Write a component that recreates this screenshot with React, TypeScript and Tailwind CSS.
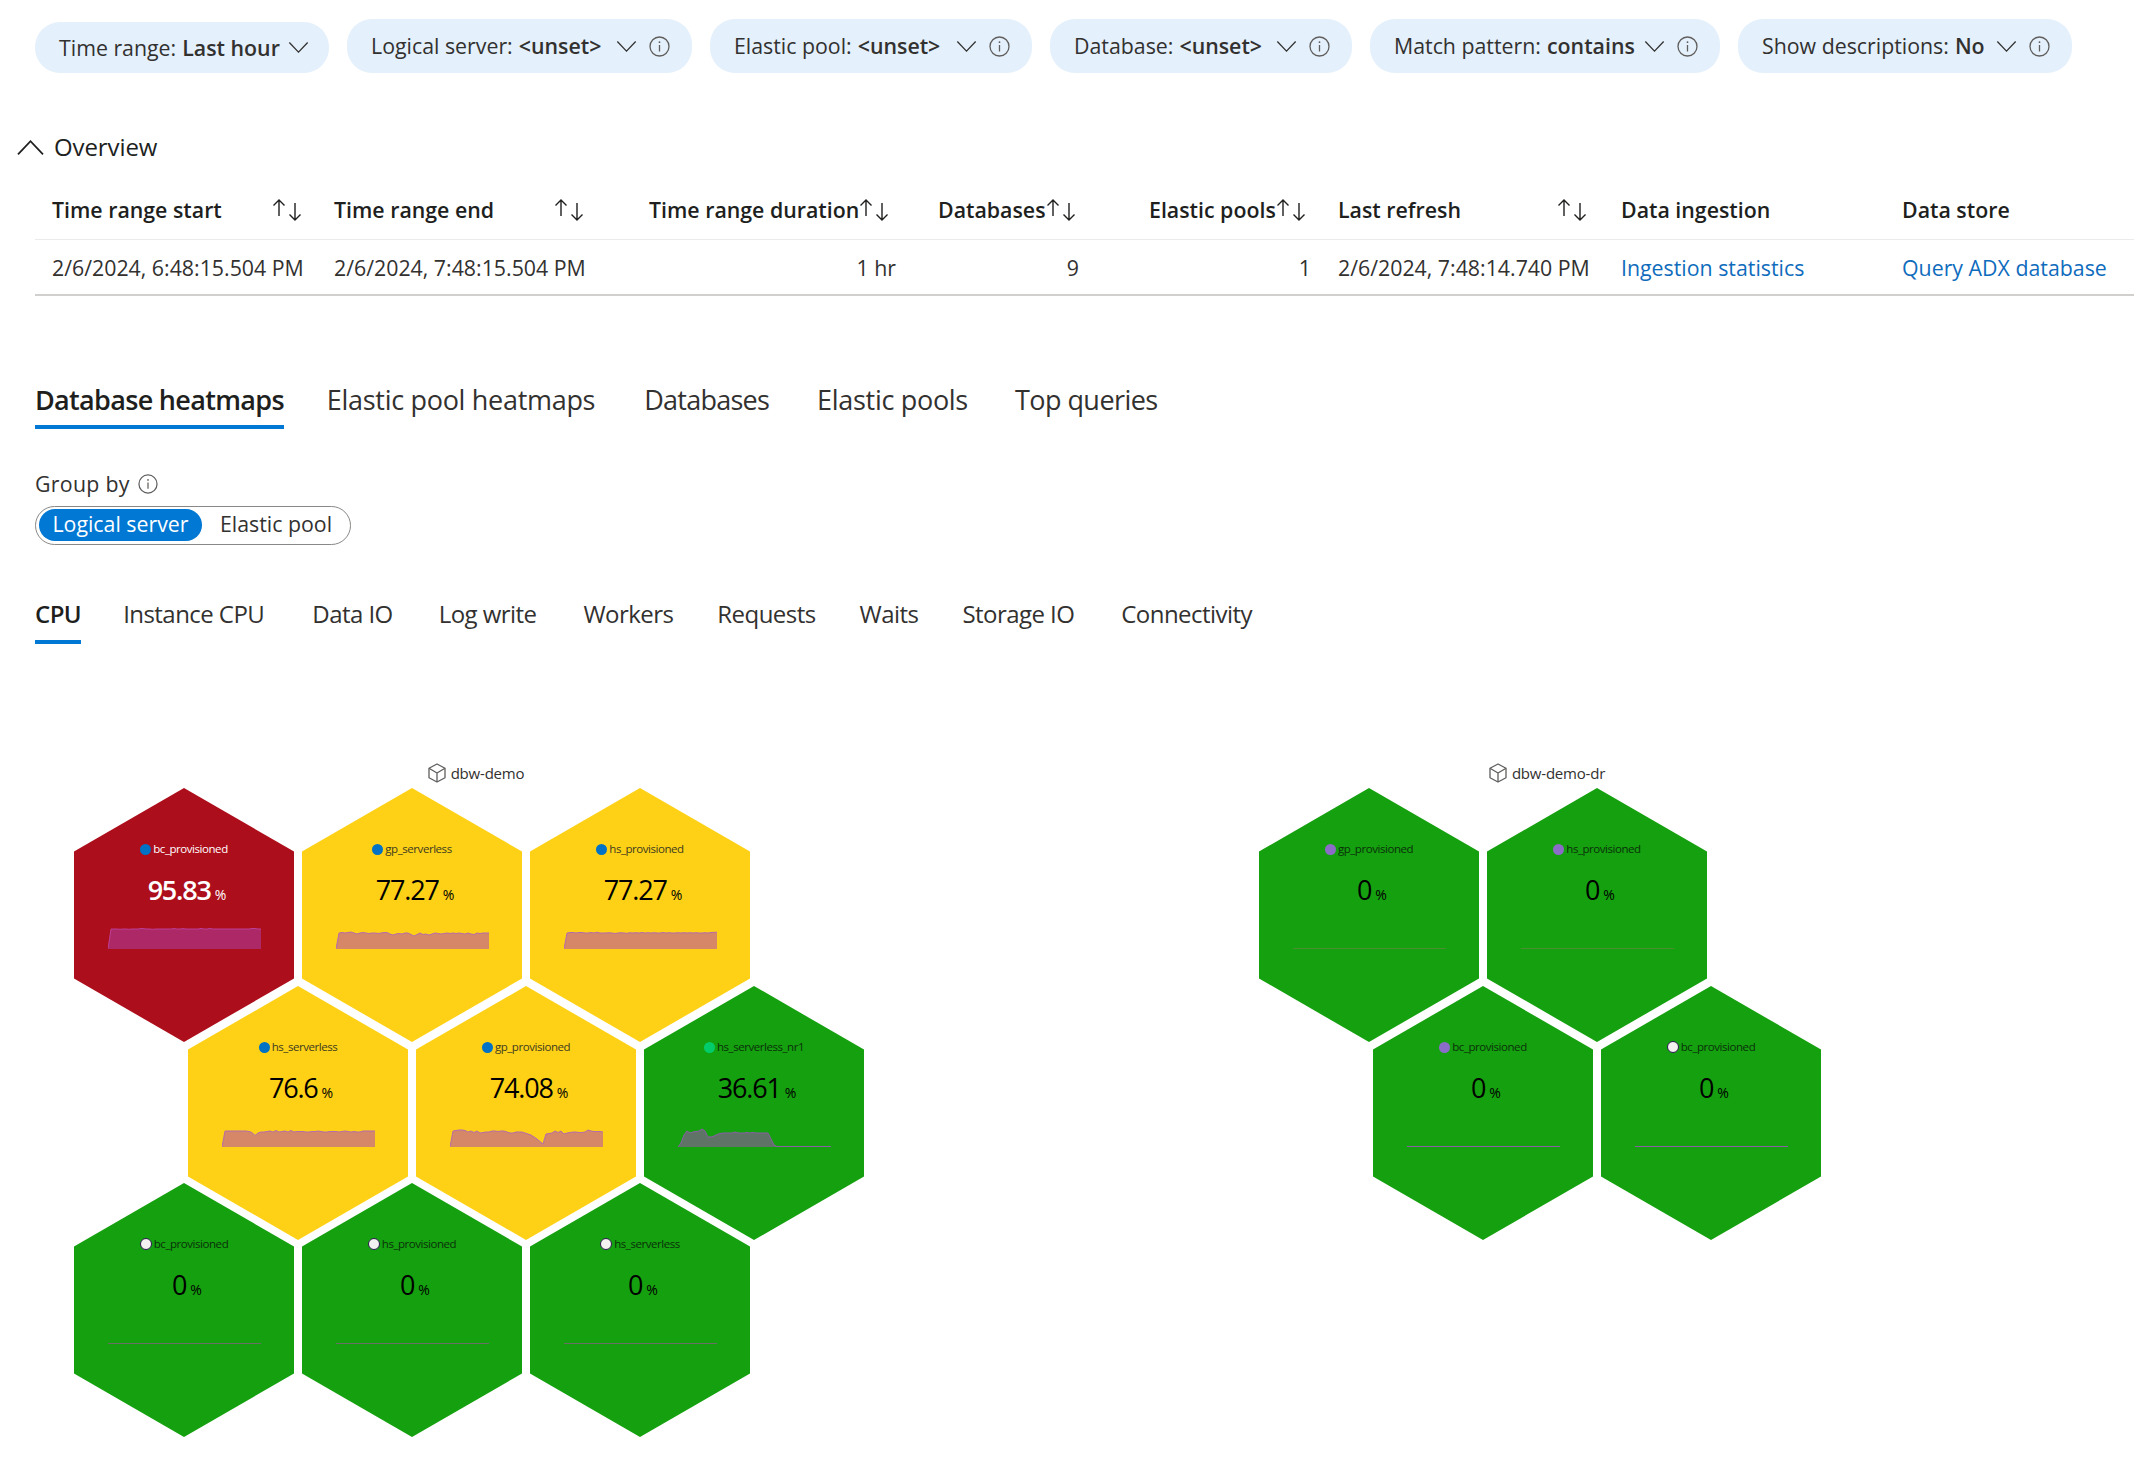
const hexShape = "[clip-path:polygon(50%_0,100%_25%,100%_75%,50%_100%,0_75%,0_25%)]";

const tones = {
  red: { bg: "bg-[#ad0e1b]", text: "text-white", label: "text-white", weight: "font-semibold", fill: "#ad2866", stroke: "#bd3f96" },
  yellow: { bg: "bg-[#fed116]", text: "text-black", label: "text-[#3d3a20]", weight: "font-medium", fill: "#d58768", stroke: "#b56cab" },
  green: { bg: "bg-[#15a00f]", text: "text-black", label: "text-[#0a300a]", weight: "font-medium", fill: "#5f7366", stroke: "#8a5fa6" },
};

const dots = {
  blue: "h-[11px] w-[11px] bg-[#0072c6]",
  mint: "h-[11px] w-[11px] bg-[#00cc6a]",
  purple: "h-[11px] w-[11px] bg-[#8c6cc9]",
  white: "h-3 w-3 bg-[#f3f2f1] border-[1.5px] border-[#2b1b4e]",
};

type HexItem = {
  name: string;
  value: string;
  tone: keyof typeof tones;
  dot: keyof typeof dots;
  spark?: number[];
  line?: string;
};

const leftRows: HexItem[][] = [
  [
    { name: "bc_provisioned", value: "95.83", tone: "red", dot: "blue", spark: [0,20,20,20,19.7,20,20,19.7,20,20,20,20.5,20.3,20,20,19.7,20,20,20,20,20,20,20.4,20,20,20.4,20,20,20,20,20,20.6,20,20,20.5,20,20,20,20,20,20,20,20,20,20,20,20,20,20.5,20.5,20,20] },
    { name: "gp_serverless", value: "77.27", tone: "yellow", dot: "blue", spark: [0,16,16.5,16,16.5,17,16,15,16,16.5,16,15.5,16,16,15.5,16,16.5,16.5,15,14,15,15.5,15,16,16,14.5,13,14.5,16,14.5,15,14,15,16,15.5,15,15.5,16,15.5,16,15.5,16,15.5,15,16,15,14.5,16,15.5,16,16,16] },
    { name: "hs_provisioned", value: "77.27", tone: "yellow", dot: "blue", spark: [0,16,16.5,16.5,16,16.5,16.5,16,16,16.5,16,16.8,16,16,16,16.3,16,15.5,16,16.3,16,15.7,16.3,16,16.3,16,16.5,16,16.3,16,16.3,16,16,16.5,16,16.3,16,16,16.3,16,16.3,16,16.3,16,16.3,16,16,16.3,16,16.5,16.7,16.7] },
  ],
  [
    { name: "hs_serverless", value: "76.6", tone: "yellow", dot: "blue", spark: [0,16,16,16,16,16,16,16,16,15.5,14.5,11.5,14,15,15,15.5,16,15,16.5,15,15.5,16,15,16.5,15,15.5,15.5,15.5,15,15,15.5,15.5,16,15.5,15,15,15.5,15.5,15.5,15,15.5,16,15.5,15,15.5,15,15,16,16,16,16,16] },
    { name: "gp_provisioned", value: "74.08", tone: "yellow", dot: "blue", spark: [0,16,16.5,17,17,16.5,15,16,14.5,16,14,14.5,15,15,16,16,15.5,16,16,15,14,14,15,15,15,14,13,12,10,8,5.5,3,13,13.5,14,16,14.5,16,13,14,14.5,15,15,14.5,14.5,15,17,16,15.5,15.5,15.5,15] },
    { name: "hs_serverless_nr1", value: "36.61", tone: "green", dot: "mint", spark: [0,4,12,16,14,15,15.5,16,18,16,10,10,11,12.5,13.5,14,14,14,14,15,14,14,14,14.5,14,14.5,14,14,14,14,14,8,2,0.5,0.5,0.5,0.5,0.5,0.5,0.5,0.5,0.5,0.5,0.5,0.5,0.5,0.5,0.5,0.5,0.5,0.5,0.5] },
  ],
  [
    { name: "bc_provisioned", value: "0", tone: "green", dot: "white", line: "#6a6f66" },
    { name: "hs_provisioned", value: "0", tone: "green", dot: "white", line: "#6a6f66" },
    { name: "hs_serverless", value: "0", tone: "green", dot: "white", line: "#6a6f66" },
  ],
];

const rightRows: HexItem[][] = [
  [
    { name: "gp_provisioned", value: "0", tone: "green", dot: "purple", line: "#4a8f30" },
    { name: "hs_provisioned", value: "0", tone: "green", dot: "purple", line: "#4a8f30" },
  ],
  [
    { name: "bc_provisioned", value: "0", tone: "green", dot: "purple", line: "#8a5fa6" },
    { name: "bc_provisioned", value: "0", tone: "green", dot: "white", line: "#8a5fa6" },
  ],
];

const filters = [
  { label: "Time range:", value: "Last hour", info: false, w: "w-[294px]" },
  { label: "Logical server:", value: "<unset>", info: true, w: "w-[345px]" },
  { label: "Elastic pool:", value: "<unset>", info: true, w: "w-[322px]" },
  { label: "Database:", value: "<unset>", info: true, w: "w-[302px]" },
  { label: "Match pattern:", value: "contains", info: true, w: "w-[350px]" },
  { label: "Show descriptions:", value: "No", info: true, w: "w-[334px]" },
];

function Chevron({ up = false, className = "" }: { up?: boolean; className?: string }) {
  return (
    <svg viewBox="0 0 22 12" className={className} fill="none" stroke="currentColor" strokeWidth="1.4">
      <path d={up ? "M1 11.5 11 1l10 10.5" : "M1 .5 11 11 21 .5"} />
    </svg>
  );
}

function InfoIcon({ className = "" }: { className?: string }) {
  return (
    <svg viewBox="0 0 21 21" className={className} fill="none" stroke="#605e5c">
      <circle cx="10.5" cy="10.5" r="9.5" strokeWidth="1.3" />
      <path d="M10.5 9v6.5" strokeWidth="1.3" />
      <circle cx="10.5" cy="6.2" r=".9" fill="#605e5c" stroke="none" />
    </svg>
  );
}

function SortIcon() {
  return (
    <svg viewBox="0 0 30 24" className="h-6 w-[30px] shrink-0" fill="none" stroke="#201f1e" strokeWidth="1.4">
      <path d="M7 18V2M1.500 7.500 7 2l5.500 5.500" />
      <path d="M23 5v17M17.500 16.500 23 22l5.500-5.500" />
    </svg>
  );
}

function CubeIcon() {
  return (
    <svg viewBox="0 0 18 20" className="h-5 w-[18px] shrink-0" fill="none" stroke="#605e5c" strokeWidth="1.3" strokeLinejoin="round">
      <path d="M9 1 17 5.300v9.400L9 19l-8-4.300V5.300z" />
      <path d="M1 5.300 9 10l8-4.700M9 10v9" />
    </svg>
  );
}

function Spark({ data, fill, stroke }: { data: number[]; fill: string; stroke: string }) {
  const step = 153 / (data.length - 1);
  const pts = data.map((h, i) => `${(i * step).toFixed(1)},${(24 - h).toFixed(1)}`).join(" ");
  return (
    <svg viewBox="0 0 153 24" className="h-6 w-[153px]" fill="none">
      <polygon points={`${pts} 153,24`} fill={fill} />
      <polyline points={pts} stroke={stroke} strokeWidth="1" />
    </svg>
  );
}

function Hex({ item }: { item: HexItem }) {
  const tone = tones[item.tone];
  return (
    <div className={`flex h-[254px] w-[220px] shrink-0 flex-col items-center pt-[53px] ${hexShape} ${tone.bg}`}>
      <div className={`flex h-4 items-center gap-[2px] text-[11.5px] leading-4 tracking-[-0.45px] ${tone.label}`}>
        <span className={`rounded-full ${dots[item.dot]}`} />
        {item.name}
      </div>
      <div className={`mt-[15px] flex h-9 items-baseline gap-1 pl-[6px] leading-9 ${tone.text}`}>
        <span className={`text-[27px] tracking-[-1.2px] ${tone.weight}`}>{item.value}</span>
        <span className="text-[14px] tracking-normal">%</span>
      </div>
      <div className="mt-[17px]">
        {item.spark ? (
          <Spark data={item.spark} fill={tone.fill} stroke={tone.stroke} />
        ) : (
          <svg viewBox="0 0 153 24" className="h-6 w-[153px]">
            <path d="M0 23.500H153" stroke={item.line} strokeWidth="1" />
          </svg>
        )}
      </div>
    </div>
  );
}

function HexGroup({ name, rows, className }: { name: string; rows: HexItem[][]; className: string }) {
  return (
    <div className={className}>
      <div className="flex h-5 items-center justify-center gap-[5px] pb-[2px] pl-[14px] text-[15px] leading-5 tracking-[-0.2px] text-[#323130]">
        <CubeIcon />
        {name}
      </div>
      <div className="mt-1">
        {rows.map((row, r) => (
          <div key={r} className={`flex gap-2 ${r === 1 ? "-mt-[56px] pl-[114px]" : ""} ${r === 2 ? "-mt-[57px]" : ""}`}>
            {row.map((item, i) => (
              <Hex key={i} item={item} />
            ))}
          </div>
        ))}
      </div>
    </div>
  );
}

const overviewCols = [
  { title: "Time range start", value: "2/6/2024, 6:48:15.504 PM", w: "w-[282px]", headPr: "pr-[15px]", cellPr: "" },
  { title: "Time range end", value: "2/6/2024, 7:48:15.504 PM", w: "w-[315px]", headPr: "pr-[48px]", cellPr: "" },
  { title: "Time range duration", value: "1 hr", w: "w-[289px]", headPr: "pr-[32px]", cellPr: "justify-end pr-[25px]" },
  { title: "Databases", value: "9", w: "w-[211px]", headPr: "pr-[59px]", cellPr: "justify-end pr-[53px]" },
  { title: "Elastic pools", value: "1", w: "w-[189px]", headPr: "pr-[16px]", cellPr: "justify-end pr-[10px]" },
  { title: "Last refresh", value: "2/6/2024, 7:48:14.740 PM", w: "w-[283px]", headPr: "pr-[17px]", cellPr: "" },
  { title: "Data ingestion", value: "Ingestion statistics", w: "w-[281px]", headPr: "", cellPr: "text-[#0f6cbd]", noSort: true },
  { title: "Data store", value: "Query ADX database", w: "w-[249px]", headPr: "", cellPr: "text-[#0f6cbd]", noSort: true },
];

const mainTabs = [
  { label: "Database heatmaps", active: true, cls: "tracking-[-0.68px]" },
  { label: "Elastic pool heatmaps", cls: "ml-[43px] tracking-[-0.3px]" },
  { label: "Databases", cls: "ml-[49px] tracking-[-0.75px]" },
  { label: "Elastic pools", cls: "ml-[48px] tracking-[-0.3px]" },
  { label: "Top queries", cls: "ml-[47px] tracking-[-0.55px]" },
];

const subTabs = [
  { label: "CPU", gap: "" },
  { label: "Instance CPU", gap: "ml-[42px]" },
  { label: "Data IO", gap: "ml-[48px]" },
  { label: "Log write", gap: "ml-[46px]" },
  { label: "Workers", gap: "ml-[47px]" },
  { label: "Requests", gap: "ml-[44px]" },
  { label: "Waits", gap: "ml-[44px]" },
  { label: "Storage IO", gap: "ml-[44px]" },
  { label: "Connectivity", gap: "ml-[47px]" },
];

export default function App() {
  return (
    <div className="h-[1458px] w-[2134px] overflow-hidden bg-white text-[21.33px] text-[#323130] [font-family:'Open_Sans',sans-serif]">
      <div className="flex items-end gap-[18px] pl-[35px] pt-[19px]">
        {filters.map((f) => (
          <div key={f.label} className={`flex items-center whitespace-nowrap rounded-[25px] bg-[#e4f0fb] pl-6 ${f.w} ${f.info ? "h-[54px] pr-[22px]" : "h-[51px] pr-5"}`}>
            <span>{f.label}</span>
            <span className="ml-[6px] font-semibold">{f.value}</span>
            <Chevron className="ml-auto h-[11px] w-[21px] text-[#323130]" />
            {f.info && <InfoIcon className="ml-3 h-[21px] w-[21px]" />}
          </div>
        ))}
      </div>

      <div className="ml-4 mt-[59px] flex h-[30px] items-center gap-[9px] text-[24px] font-medium tracking-[-0.1px] text-[#201f1e]">
        <Chevron up className="h-[15px] w-[29px] text-[#201f1e]" />
        Overview
      </div>

      <div className="ml-[35px] mt-[19px]">
        <div className="flex h-[59px] border-b border-[#edebe9]">
          {overviewCols.map((c) => (
            <div key={c.title} className={`flex items-center pl-[17px] font-semibold text-[#201f1e] ${c.w} ${c.headPr}`}>
              <span className="whitespace-nowrap">{c.title}</span>
              {!c.noSort && <span className="ml-auto"><SortIcon /></span>}
            </div>
          ))}
        </div>
        <div className="flex h-[56px] border-b-2 border-[#d2d0ce]">
          {overviewCols.map((c) => (
            <div key={c.title} className={`flex items-center whitespace-nowrap pl-[17px] pt-[2px] ${c.w} ${c.cellPr}`}>
              {c.value}
            </div>
          ))}
        </div>
      </div>

      <div className="ml-[35px] mt-[79px] flex text-[27px]">
        {mainTabs.map((t) => (
          <div key={t.label} className={`h-[54px] leading-[50px] ${t.cls} ${t.active ? "border-b-4 border-[#0078d4] font-semibold text-[#201f1e]" : ""}`}>
            {t.label}
          </div>
        ))}
      </div>

      <div className="ml-[35px] mt-[40px] flex h-[30px] items-center gap-2 font-medium tracking-[0.3px]">
        Group by
        <InfoIcon className="h-5 w-5" />
      </div>

      <div className="ml-[35px] mt-[7px] flex h-[39px] w-[316px] items-center rounded-full border border-[#8a8886] pb-[1px] pl-[3px]">
        <div className="flex h-8 w-[163px] items-center justify-center rounded-full bg-[#0078d4] pb-[2px] text-white">Logical server</div>
        <div className="ml-[18px] pb-[2px]">Elastic pool</div>
      </div>

      <div className="ml-[35px] mt-[43px] flex text-[24px] tracking-[-0.55px]">
        {subTabs.map((t, i) => (
          <div key={t.label} className={`h-[56px] leading-[52px] ${t.gap} ${i === 0 ? "border-b-4 border-[#0078d4] font-semibold text-[#201f1e]" : ""}`}>
            {t.label}
          </div>
        ))}
      </div>

      <div className="mt-[120px] flex">
        <HexGroup name="dbw-demo" rows={leftRows} className="ml-[74px] w-[790px]" />
        <HexGroup name="dbw-demo-dr" rows={rightRows} className="ml-[395px] w-[562px]" />
      </div>
    </div>
  );
}
